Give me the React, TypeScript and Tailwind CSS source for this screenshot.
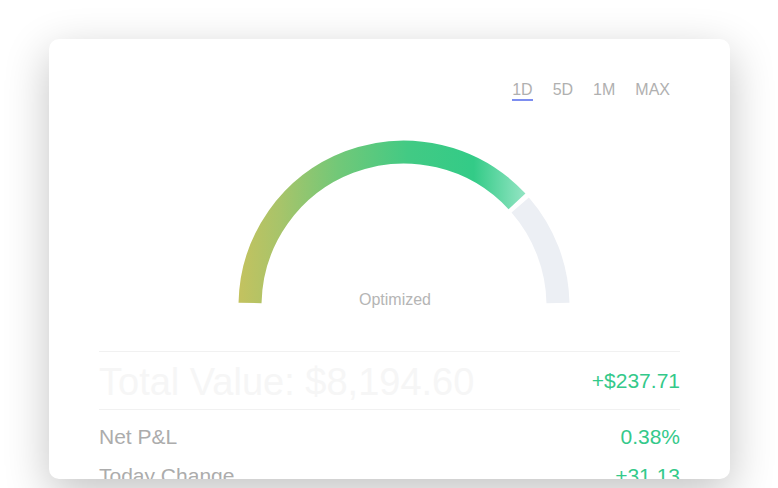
import React from "react";

const ranges = ["1D", "5D", "1M", "MAX"];

const rows = [
  { label: "Net P&L", value: "0.38%" },
  { label: "Today Change", value: "+31.13" },
];

const Gauge = () => {
  return (
    <div className="relative mt-[18px] h-[200px] w-full">
      <svg width="581" height="200" viewBox="0 0 581 200" className="block">
        <defs>
          <linearGradient id="gaugeFill" gradientUnits="userSpaceOnUse" x1="139" y1="0" x2="423" y2="0">
            <stop offset="0" stopColor="#c4c25f" />
            <stop offset="0.15" stopColor="#a7c46a" />
            <stop offset="0.35" stopColor="#72c878" />
            <stop offset="0.6" stopColor="#42ca84" />
            <stop offset="0.83" stopColor="#33cb87" />
            <stop offset="1" stopColor="#8ee3c0" />
          </linearGradient>
        </defs>
        {/* track */}
        <path d="M421.2 86 A154 154 0 0 1 458.97 184" fill="none" stroke="#eceff4" strokeWidth="23" />
        {/* value */}
        <path d="M151.03 184 A154 154 0 0 1 418 82.4" fill="none" stroke="url(#gaugeFill)" strokeWidth="23" />
      </svg>
      <span className="absolute left-[296px] top-[172px] -translate-x-1/2 text-[16px] leading-[18px] text-[#b5b5b5]">
        Optimized
      </span>
    </div>
  );
};

export default function App() {
  return (
    <div
      className="h-[488px] w-[778px] overflow-hidden bg-white pl-[49px] pt-[39px]"
      style={{ fontFamily: '"Liberation Sans", Arial, sans-serif' }}
    >
      <div className="h-[440px] w-[681px] overflow-hidden rounded-[10px] bg-white px-[50px] pt-[42px] shadow-[0_14px_45px_rgba(0,0,0,0.24)]">
        {/* range tabs */}
        <div className="flex justify-end gap-5 pr-[10px]">
          {ranges.map((r, i) => (
            <span
              key={r}
              className={`text-[16px] leading-[18px] text-[#b0b0b0] ${
                i === 0 ? "border-b-2 border-[#7d8ef0]" : "border-b-2 border-transparent"
              }`}
            >
              {r}
            </span>
          ))}
        </div>

        <Gauge />

        {/* totals */}
        <div className="mt-[32px] flex h-[59px] items-center justify-between border-y border-[#f1f1f1]">
          <span className="pt-[2px] text-[38px] leading-[38px] text-[#f6f6f6]">Total Value: $8,194.60</span>
          <span className="text-[21px] leading-[21px] text-[#34c98a]">+$237.71</span>
        </div>

        <div className="flex flex-col gap-[18px] pt-[16px]">
          {rows.map((row) => (
            <div key={row.label} className="flex items-center justify-between">
              <span className="text-[21px] leading-[21px] text-[#acacac]">{row.label}</span>
              <span className="text-[21px] leading-[21px] text-[#34c98a]">{row.value}</span>
            </div>
          ))}
        </div>
      </div>
    </div>
  );
}
